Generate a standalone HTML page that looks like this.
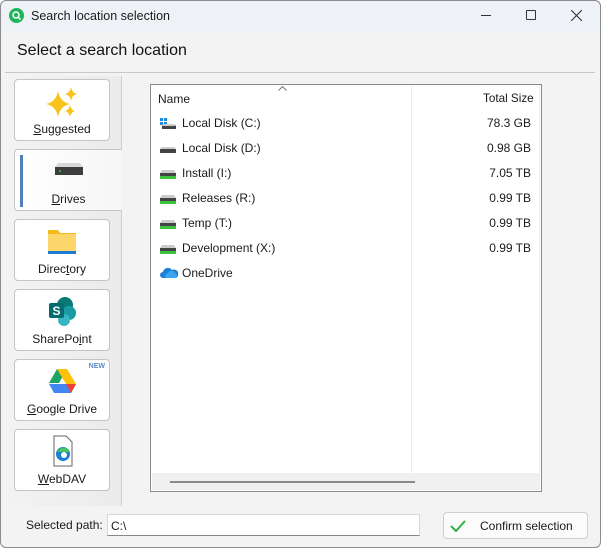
<!DOCTYPE html>
<html><head><style>
*{box-sizing:border-box;margin:0;padding:0}
body{width:601px;height:548px;overflow:hidden;background:#fff;font-family:"Liberation Sans",sans-serif;font-size:12px;color:#1a1a1a;position:relative}
.win{position:absolute;left:0;top:0;width:601px;height:548px;border-radius:6px;background:#f3f3f3;overflow:hidden}
.frame{position:absolute;left:0;top:0;width:601px;height:548px;border:1px solid #8c8c8c;border-radius:6px;pointer-events:none}
.title{position:absolute;left:0;top:0;width:100%;height:31px;background:#eef2f7}
.abs{position:absolute}
.tab{position:absolute;left:14px;width:96px;height:62px;background:#fff;border:1px solid #c4c4c4;border-radius:4px;text-align:center}
.tab .lbl{position:absolute;left:0;right:0;top:42px;font-size:12px}
.tab .ic{position:absolute;left:0;right:0;top:5px;height:34px}
.row{position:absolute;left:0;width:390px;height:20px}
.row .n{position:absolute;left:31px;top:2px}
.row .s{position:absolute;right:10px;top:2px;text-align:right}
.row .i{position:absolute;left:9px;top:4px}
u{text-decoration:underline}
</style></head><body>
<div class="win">
<div class="title">
 <div class="abs" style="left:9px;top:8px;width:15px;height:15px;border-radius:50%;background:#1fb35a"></div>
 <svg class="abs" style="left:9px;top:8px" width="15" height="15"><circle cx="7" cy="7" r="3" fill="none" stroke="#fff" stroke-width="1.5"/><path d="M9 9l2.5 2.5" stroke="#fff" stroke-width="1.5"/></svg>
 <div class="abs" style="left:31px;top:9px;font-size:12.5px">Search location selection</div>
 <div class="abs" style="left:481px;top:15px;width:10px;height:1px;background:#333"></div>
 <div class="abs" style="left:526px;top:10px;width:10px;height:10px;border:1px solid #333;border-radius:1px"></div>
 <svg class="abs" style="left:571px;top:10px" width="11" height="11"><path d="M0 0L11 11M11 0L0 11" stroke="#333" stroke-width="1.1"/></svg>
</div>
<div class="abs" style="left:17px;top:42px;font-size:16px;color:#111">Select a search location</div>
<div class="abs" style="left:5px;top:72px;width:590px;height:1px;background:#c8c8c8"></div>
<div class="abs" style="left:5px;top:76px;width:116px;height:430px;background:linear-gradient(90deg,#f3f3f3,#ebebeb)"></div>
<div class="abs" style="left:121px;top:76px;width:1px;height:430px;background:#cfcfcf"></div>

<div class="tab" style="top:79px"><div class="ic"><svg width="44" height="36" viewBox="0 0 44 36"><path d="M18 6 Q20 17 30 19 Q20 21 18 32 Q16 21 6 19 Q16 17 18 6Z" fill="#f7c31c"/><path d="M31 2 Q32 8 37 9 Q32 10 31 16 Q30 10 25 9 Q30 8 31 2Z" fill="#f7c31c"/><path d="M30 20 Q31 25 35 26 Q31 27 30 32 Q29 27 25 26 Q29 25 30 20Z" fill="#f7c31c"/></svg></div><div class="lbl"><u>S</u>uggested</div></div>
<div class="tab" style="top:149px;width:108px;border-right:none;border-radius:4px 0 0 4px;background:linear-gradient(90deg,#fff,#f6f6f6)"><div class="abs" style="left:5px;top:5px;width:3px;height:52px;background:#4f7fb6"></div><div class="ic"><svg width="30" height="32"><rect x="1" y="12" width="28" height="8" fill="#3d3d3d"/><path d="M4 8h22l3 4H1z" fill="#d8d8d8"/><circle cx="6" cy="16" r="1" fill="#3c3"/></svg></div><div class="lbl"><u>D</u>rives</div></div>
<div class="tab" style="top:219px"><div class="ic"><svg width="30" height="32"><path d="M1 5h10l2 3h16v20H1z" fill="#f5bb1d"/><rect x="1" y="9" width="28" height="18" fill="#fcd66a"/><rect x="1" y="26" width="28" height="3" fill="#1e7bd4"/></svg></div><div class="lbl">Direc<u>t</u>ory</div></div>
<div class="tab" style="top:289px"><div class="ic"><svg width="34" height="34"><circle cx="20" cy="10" r="8" fill="#0b7a75"/><circle cx="24" cy="18" r="7" fill="#1a9ba1"/><circle cx="19" cy="25" r="6" fill="#38b5c2"/><rect x="4" y="8" width="15" height="15" rx="2" fill="#036c70"/><text x="7.5" y="20" font-size="12" font-weight="bold" fill="#fff" font-family="Liberation Sans">S</text></svg></div><div class="lbl">SharePo<u>i</u>nt</div></div>
<div class="tab" style="top:359px"><div class="abs" style="right:4px;top:3px;font-size:7px;font-weight:bold;color:#5b87c5">NEW</div><div class="ic"><svg width="30" height="32"><path d="M10 4h10l-8 14H2z" fill="#1fa463"/><path d="M10 4h10l9 15H19z" fill="#ffc107"/><path d="M2 19l5 9h17l5-9z" fill="#4285f4"/><path d="M24 28l5-9H19z" fill="#ea4335"/></svg></div><div class="lbl"><u>G</u>oogle Drive</div></div>
<div class="tab" style="top:429px"><div class="ic"><svg width="30" height="34"><path d="M7 1h12l6 6v24H7z" fill="#fff" stroke="#666"/><circle cx="16" cy="19" r="7" fill="#1b7fd6"/><path d="M10 17a7 7 0 0 1 13 0z" fill="#43c45d"/><circle cx="17" cy="20" r="3" fill="#fff"/></svg></div><div class="lbl"><u>W</u>ebDAV</div></div>

<div class="abs" style="left:150px;top:84px;width:392px;height:408px;background:#fff;border:1px solid #8a8a8a">
 <div class="abs" style="left:260px;top:0px;width:1px;height:388px;background:#e8eef6"></div>
 <div class="abs" style="left:388px;top:0px;width:1px;height:388px;background:#e8eef6"></div>
 <svg class="abs" style="left:127px;top:1px" width="9" height="5"><path d="M0.5 4.5L4.5 0.5L8.5 4.5" fill="none" stroke="#777"/></svg>
 <div class="abs" style="left:7px;top:7px">Name</div>
 <div class="abs" style="left:332px;top:7px;font-size:11.7px">Total Size</div>
 <div class="row" style="top:29px"><svg class="i" width="16" height="12"><rect x="0" y="0" width="3" height="3" fill="#1b8be0"/><rect x="4" y="0" width="3" height="3" fill="#1b8be0"/><rect x="0" y="4" width="3" height="3" fill="#1b8be0"/><rect x="4" y="4" width="3" height="3" fill="#1b8be0"/><rect x="2" y="7" width="14" height="4" fill="#444"/><path d="M3 6h11l2 2H2z" fill="#ccc"/></svg><span class="n">Local Disk (C:)</span><span class="s">78.3 GB</span></div>
 <div class="row" style="top:54px"><svg class="i" width="16" height="12"><path d="M2 4h12l2 2H0z" fill="#ccc"/><rect x="0" y="6" width="16" height="4" fill="#444"/></svg><span class="n">Local Disk (D:)</span><span class="s">0.98 GB</span></div>
 <div class="row" style="top:79px"><svg class="i" width="16" height="12"><path d="M2 2h12l2 3H0z" fill="#ccc"/><rect x="0" y="5" width="16" height="3" fill="#444"/><rect x="0" y="8" width="16" height="3" fill="#3dc33d"/></svg><span class="n">Install (I:)</span><span class="s">7.05 TB</span></div>
 <div class="row" style="top:104px"><svg class="i" width="16" height="12"><path d="M2 2h12l2 3H0z" fill="#ccc"/><rect x="0" y="5" width="16" height="3" fill="#444"/><rect x="0" y="8" width="16" height="3" fill="#3dc33d"/></svg><span class="n">Releases (R:)</span><span class="s">0.99 TB</span></div>
 <div class="row" style="top:129px"><svg class="i" width="16" height="12"><path d="M2 2h12l2 3H0z" fill="#ccc"/><rect x="0" y="5" width="16" height="3" fill="#444"/><rect x="0" y="8" width="16" height="3" fill="#3dc33d"/></svg><span class="n">Temp (T:)</span><span class="s">0.99 TB</span></div>
 <div class="row" style="top:154px"><svg class="i" width="16" height="12"><path d="M2 2h12l2 3H0z" fill="#ccc"/><rect x="0" y="5" width="16" height="3" fill="#444"/><rect x="0" y="8" width="16" height="3" fill="#3dc33d"/></svg><span class="n">Development (X:)</span><span class="s">0.99 TB</span></div>
 <div class="row" style="top:179px"><svg class="i" width="18" height="12" style="top:3px"><path d="M3 11a3 3 0 0 1 0-6a5 5 0 0 1 9-2a4 4 0 0 1 4 8z" fill="#1c7fd8"/><path d="M6 11a3 3 0 0 1 2-5a4 4 0 0 1 7 0a3 3 0 0 1 1 5z" fill="#3ba3ef"/></svg><span class="n">OneDrive</span></div>
 <div class="abs" style="left:1px;top:388px;width:388px;height:17px;background:#f0f0f0"></div>
 <div class="abs" style="left:19px;top:396px;width:245px;height:2px;background:#8a8a8a"></div>
</div>

<div class="abs" style="left:26px;top:518px">Selected path:</div>
<div class="abs" style="left:107px;top:514px;width:313px;height:22px;background:#fff;border:1px solid #d8d8d8;border-bottom-color:#888;padding:4px 3px;">C:\</div>
<div class="abs" style="left:443px;top:512px;width:145px;height:27px;background:#fbfbfb;border:1px solid #cfcfcf;border-radius:4px">
 <svg class="abs" style="left:6px;top:7px" width="16" height="12"><path d="M1 6l5 5L15 1" fill="none" stroke="#2fae47" stroke-width="2"/></svg>
 <div class="abs" style="left:36px;top:6px">Confirm selection</div>
</div>
</div>
<div class="frame"></div>
</body></html>
